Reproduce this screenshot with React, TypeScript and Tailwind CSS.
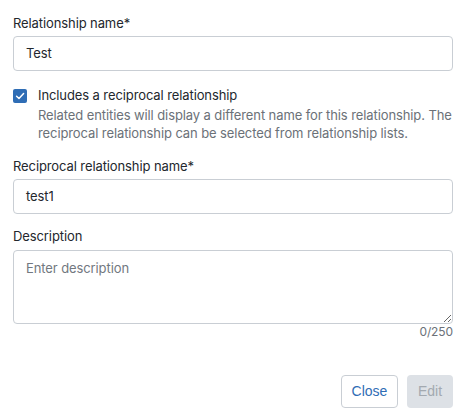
import React from "react";

export default function App() {
  return (
    <div className="w-[459px] h-[408px] bg-white font-['Inter',sans-serif] text-[#23272d] tracking-[-0.1px]">
      <div className="pl-[13px] pr-[6px] pt-[13px]">
        <div className="text-[13px] leading-[20px] mb-[3px]">Relationship name*</div>
        <div className="h-[35px] border border-[#c9ced4] rounded-[4px] flex items-center px-[12px] text-[13px]">Test</div>

        <div className="mt-[14px] flex items-start gap-[11px]">
          <div className="mt-[4px] w-[14px] h-[14px] rounded-[2px] bg-[#2f6db5] flex items-center justify-center shrink-0">
            <svg width="10" height="10" viewBox="0 0 10 10" fill="none">
              <path d="M1.6 5.2 L4 7.5 L8.6 2.6" stroke="white" strokeWidth="1.5" strokeLinecap="round" strokeLinejoin="round" />
            </svg>
          </div>
          <div>
            <div className="text-[13px] leading-[20px]">Includes a reciprocal relationship</div>
            <div className="text-[13px] leading-[18px] text-[#6b7178] mt-[1px]">
              Related entities will display a different name for this relationship. The reciprocal relationship can be selected from relationship lists.
            </div>
          </div>
        </div>

        <div className="mt-[14px] text-[13px] leading-[20px] mb-[3px]">Reciprocal relationship name*</div>
        <div className="h-[35px] border border-[#c9ced4] rounded-[4px] flex items-center px-[12px] text-[13px]">test1</div>

        <div className="mt-[12px] text-[13px] leading-[20px] mb-[4px]">Description</div>
        <textarea
          placeholder="Enter description"
          className="block w-full h-[74px] border border-[#c9ced4] rounded-[4px] px-[12px] py-[7px] text-[13px] leading-[20px] placeholder:text-[#727880] resize-y outline-none"
        />
        <div className="text-right text-[12px] leading-[16px] text-[#6b7178]">0/250</div>

        <div className="mt-[35px] flex justify-end gap-[9px] font-['Liberation_Sans',Arial,sans-serif] tracking-normal">
          <button className="w-[57px] h-[33px] border border-[#c9ced4] rounded-[4px] text-[#2f6db5] text-[14px] bg-white">Close</button>
          <button className="w-[46px] h-[33px] rounded-[4px] bg-[#dde1e6] text-[#a3a9b0] text-[14px]">Edit</button>
        </div>
      </div>
    </div>
  );
}
